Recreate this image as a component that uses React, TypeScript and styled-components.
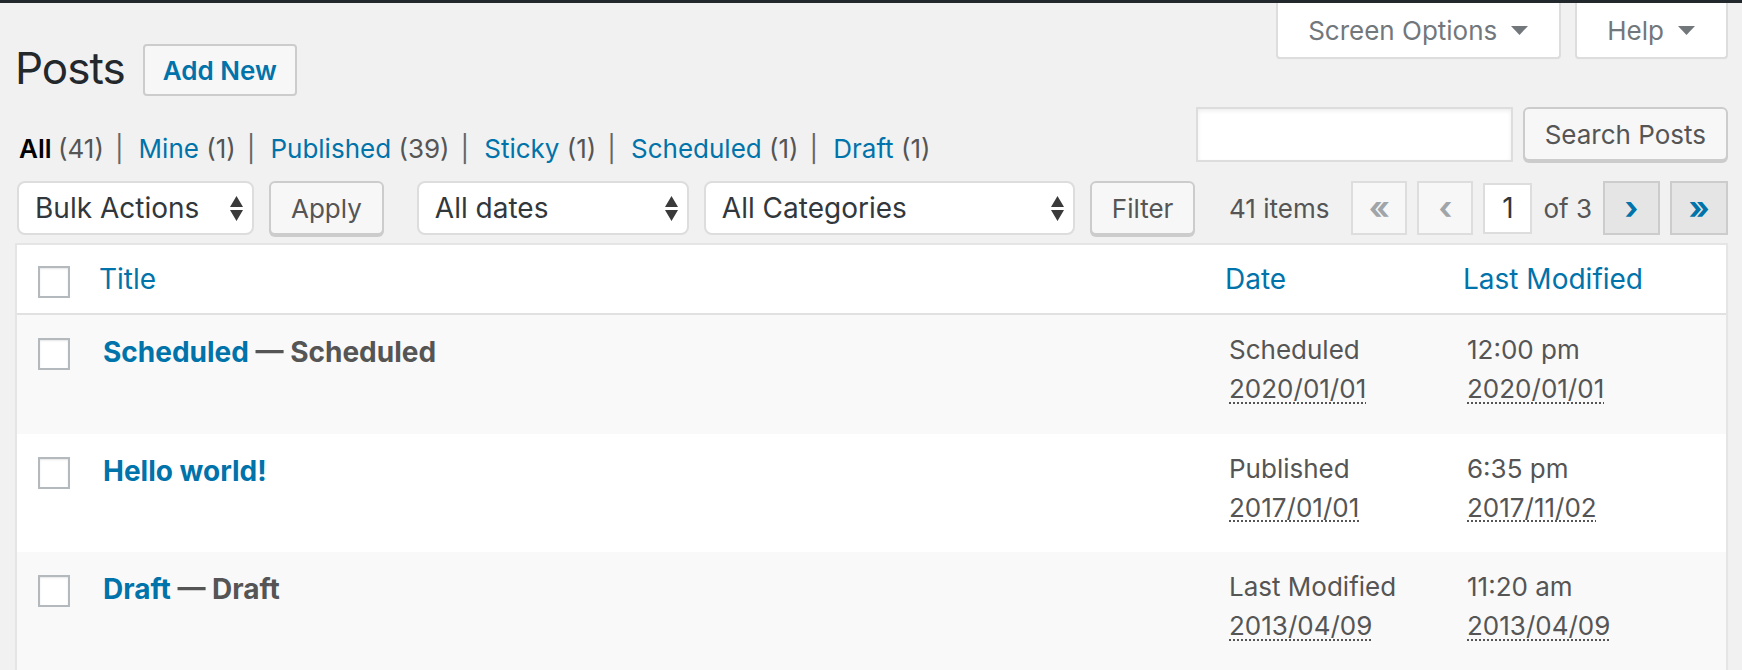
import React from "react";
import styled, { createGlobalStyle } from "styled-components";

const GlobalStyle = createGlobalStyle`
  html, body { margin: 0; padding: 0; background: #f1f1f1; }
  body {
    font-family: Inter, "Noto Sans", Roboto, sans-serif;
    color: #444;
    -webkit-font-smoothing: antialiased;
  }
  * { box-sizing: border-box; }
`;

const AdminBarEdge = styled.div`
  height: 3px;
  background: #23282d;
`;

const Wrap = styled.div`
  padding: 0 14px 0 15px;
`;

const TopRow = styled.div`
  display: flex;
  justify-content: space-between;
  align-items: flex-start;
`;

const TitleBar = styled.div`
  display: flex;
  align-items: flex-start;
  margin-top: 41px;
`;

const PageTitle = styled.h1`
  margin: 0;
  font-size: 44px;
  letter-spacing: -1px;
  line-height: 48px;
  font-weight: 400;
  color: #23282d;
`;

const AddNew = styled.a`
  margin-left: 18px;
  height: 52px;
  padding: 0 18px;
  display: inline-flex;
  align-items: center;
  border: 2px solid #ccc;
  border-radius: 4px;
  background: #f7f7f7;
  color: #0073aa;
  font-size: 26px;
  font-weight: 600;
  text-decoration: none;
`;

const ScreenMetaLinks = styled.div`
  display: flex;
  gap: 14px;
`;

const MetaTab = styled.button`
  height: 56px;
  display: flex;
  align-items: center;
  gap: 14px;
  padding: 0 31px 0 30px;
  background: #fff;
  border: 2px solid #ddd;
  border-top: none;
  border-radius: 0 0 4px 4px;
  font-family: inherit;
  font-size: 26px;
  color: #72777c;
  box-shadow: 0 1px 1px -1px rgba(0, 0, 0, 0.1);
`;

const FilterRow = styled.div`
  display: flex;
  justify-content: space-between;
  align-items: flex-start;
`;

const Views = styled.ul`
  list-style: none;
  margin: 33px 0 0;
  padding: 0 0 0 4px;
  display: flex;
  align-items: baseline;
  font-size: 26px;
  line-height: 39px;
  color: #666;
`;

const ViewItem = styled.li`
  display: flex;
  align-items: baseline;
  white-space: pre;
`;

const ViewLink = styled.a<{ $current?: boolean }>`
  color: ${(p) => (p.$current ? "#000" : "#0073aa")};
  font-weight: ${(p) => (p.$current ? 600 : 400)};
  text-decoration: none;
`;

const Count = styled.span`
  color: #555;
  font-weight: 400;
`;

const Sep = styled.span`
  margin: 0 15px 0 11px;
  color: #666;
`;

const SearchBox = styled.div`
  display: flex;
  gap: 10px;
  margin-top: 11px;
`;

const SearchInput = styled.input`
  width: 317px;
  height: 55px;
  border: 2px solid #ddd;
  background: #fff;
  box-shadow: inset 0 2px 4px rgba(0, 0, 0, 0.07);
  padding: 0 10px;
  font-family: inherit;
  font-size: 28px;
  outline: none;
`;

const Button = styled.button`
  height: 54px;
  padding: 0 20px;
  border: 2px solid #ccc;
  border-radius: 6px;
  background: #f7f7f7;
  box-shadow: 0 2px 0 #ccc;
  color: #555;
  font-family: inherit;
  font-size: 26px;
  white-space: nowrap;
`;

const TableNav = styled.div`
  display: flex;
  justify-content: space-between;
  align-items: center;
  margin-top: 13px;
  height: 54px;
`;

const Actions = styled.div`
  display: flex;
  gap: 33px;
  margin-left: 2px;
`;

const ActionGroup = styled.div`
  display: flex;
  gap: 15px;
`;

const Select = styled.div<{ $w: number }>`
  width: ${(p) => p.$w}px;
  height: 54px;
  display: flex;
  align-items: center;
  justify-content: space-between;
  padding: 0 9px 0 16px;
  border: 2px solid #ddd;
  border-radius: 8px;
  background: #fff;
  color: #32373c;
  font-size: 28px;
`;

const Pages = styled.div`
  display: flex;
  align-items: center;
`;

const ItemsCount = styled.span`
  font-size: 26px;
  color: #555;
  margin-right: 22px;
`;

const PageLinks = styled.div`
  display: flex;
  align-items: center;
  gap: 10px;
`;

const PageBtn = styled.span<{ $active?: boolean; $w: number }>`
  width: ${(p) => p.$w}px;
  height: 54px;
  display: flex;
  align-items: center;
  justify-content: center;
  border: 2px solid ${(p) => (p.$active ? "#ccc" : "#ddd")};
  background: ${(p) => (p.$active ? "#e5e5e5" : "#f7f7f7")};
  color: ${(p) => (p.$active ? "#0073aa" : "#a0a5aa")};
  font-size: 32px;
  font-weight: 700;
  line-height: 1;
`;

const PageInput = styled.input`
  width: 49px;
  height: 51px;
  border: 2px solid #ddd;
  background: #fff;
  text-align: center;
  font-family: inherit;
  font-size: 28px;
  color: #32373c;
  padding: 0;
  outline: none;
`;

const PagingText = styled.span`
  font-size: 26px;
  color: #555;
  margin: 0 1px;
`;

const ListTable = styled.div`
  margin-top: 8px;
  border: 2px solid #e5e5e5;
  background: #fff;
  box-shadow: 0 1px 1px rgba(0, 0, 0, 0.04);
`;

const HeadRow = styled.div`
  display: grid;
  grid-template-columns: 66px 1fr 238px 279px;
  height: 70px;
  align-items: center;
  border-bottom: 2px solid #e1e1e1;
`;

const HeadCheckCell = styled.div`
  align-self: start;
  padding: 21px 0 0 21px;
`;

const HeadLink = styled.a`
  padding-left: 16px;
  font-size: 28px;
  color: #0073aa;
  text-decoration: none;
`;

const Row = styled.div<{ $alt?: boolean }>`
  display: grid;
  grid-template-columns: 66px 1fr 238px 279px;
  align-items: start;
  min-height: 118.5px;
  background: ${(p) => (p.$alt ? "#f9f9f9" : "#fff")};
`;

const CheckCell = styled.div`
  padding: 23px 0 0 21px;
`;

const Checkbox = styled.input`
  appearance: none;
  display: block;
  margin: 0;
  width: 32px;
  height: 32px;
  border: 2px solid #b4b9be;
  background: #fff;
  box-shadow: inset 0 1px 2px rgba(0, 0, 0, 0.1);
`;

const TitleCell = styled.div`
  padding: 17px 20px 0;
  font-size: 28px;
  line-height: 40px;
  font-weight: 700;
  color: #555;
`;

const RowTitle = styled.a`
  color: #0073aa;
  text-decoration: none;
`;

const DateCell = styled.div`
  padding: 15px 20px 0;
  font-size: 26px;
  line-height: 39px;
  color: #555;
`;

const DateAbbr = styled.abbr`
  text-decoration: underline dotted;
  text-decoration-thickness: 2px;
  text-underline-offset: 4px;
`;

const Caret = () => (
  <svg width="17" height="9" viewBox="0 0 17 9" aria-hidden="true">
    <path d="M0 0h17L8.5 9z" fill="currentColor" />
  </svg>
);

const UpDown = () => (
  <svg width="13" height="25" viewBox="0 0 13 25" aria-hidden="true">
    <path d="M0 11L6.5 0L13 11z M0 14h13L6.5 25z" fill="#3a3a3a" />
  </svg>
);

const views = [
  { label: "All", count: 41, current: true },
  { label: "Mine", count: 1 },
  { label: "Published", count: 39 },
  { label: "Sticky", count: 1 },
  { label: "Scheduled", count: 1 },
  { label: "Draft", count: 1 },
];

const posts = [
  {
    title: "Scheduled",
    state: "Scheduled",
    status: "Scheduled",
    date: "2020/01/01",
    time: "12:00 pm",
    modified: "2020/01/01",
  },
  {
    title: "Hello world!",
    state: "",
    status: "Published",
    date: "2017/01/01",
    time: "6:35 pm",
    modified: "2017/11/02",
  },
  {
    title: "Draft",
    state: "Draft",
    status: "Last Modified",
    date: "2013/04/09",
    time: "11:20 am",
    modified: "2013/04/09",
  },
];

export default function App() {
  return (
    <>
      <GlobalStyle />
      <AdminBarEdge />
      <Wrap>
        <TopRow>
          <TitleBar>
            <PageTitle>Posts</PageTitle>
            <AddNew href="#">Add New</AddNew>
          </TitleBar>
          <ScreenMetaLinks>
            <MetaTab>
              Screen Options <Caret />
            </MetaTab>
            <MetaTab>
              Help <Caret />
            </MetaTab>
          </ScreenMetaLinks>
        </TopRow>

        <FilterRow>
          <Views>
            {views.map((v, i) => (
              <ViewItem key={v.label}>
                <ViewLink href="#" $current={v.current}>
                  {v.label} <Count>({v.count})</Count>
                </ViewLink>
                {i < views.length - 1 && <Sep>|</Sep>}
              </ViewItem>
            ))}
          </Views>
          <SearchBox>
            <SearchInput type="search" />
            <Button>Search Posts</Button>
          </SearchBox>
        </FilterRow>

        <TableNav>
          <Actions>
            <ActionGroup>
              <Select $w={237}>
                Bulk Actions <UpDown />
              </Select>
              <Button>Apply</Button>
            </ActionGroup>
            <ActionGroup>
              <Select $w={272}>
                All dates <UpDown />
              </Select>
              <Select $w={371}>
                All Categories <UpDown />
              </Select>
              <Button>Filter</Button>
            </ActionGroup>
          </Actions>
          <Pages>
            <ItemsCount>41 items</ItemsCount>
            <PageLinks>
              <PageBtn $w={56}>«</PageBtn>
              <PageBtn $w={56}>‹</PageBtn>
              <PageInput defaultValue="1" />
              <PagingText>of 3</PagingText>
              <PageBtn $w={57} $active>
                ›
              </PageBtn>
              <PageBtn $w={58} $active>
                »
              </PageBtn>
            </PageLinks>
          </Pages>
        </TableNav>

        <ListTable>
          <HeadRow>
            <HeadCheckCell>
              <Checkbox type="checkbox" />
            </HeadCheckCell>
            <HeadLink href="#">Title</HeadLink>
            <HeadLink href="#">Date</HeadLink>
            <HeadLink href="#">Last Modified</HeadLink>
          </HeadRow>
          {posts.map((p, i) => (
            <Row key={p.title} $alt={i % 2 === 0}>
              <CheckCell>
                <Checkbox type="checkbox" />
              </CheckCell>
              <TitleCell>
                <RowTitle href="#">{p.title}</RowTitle>
                {p.state && ` — ${p.state}`}
              </TitleCell>
              <DateCell>
                {p.status}
                <br />
                <DateAbbr title={p.date}>{p.date}</DateAbbr>
              </DateCell>
              <DateCell>
                {p.time}
                <br />
                <DateAbbr title={p.modified}>{p.modified}</DateAbbr>
              </DateCell>
            </Row>
          ))}
        </ListTable>
      </Wrap>
    </>
  );
}
